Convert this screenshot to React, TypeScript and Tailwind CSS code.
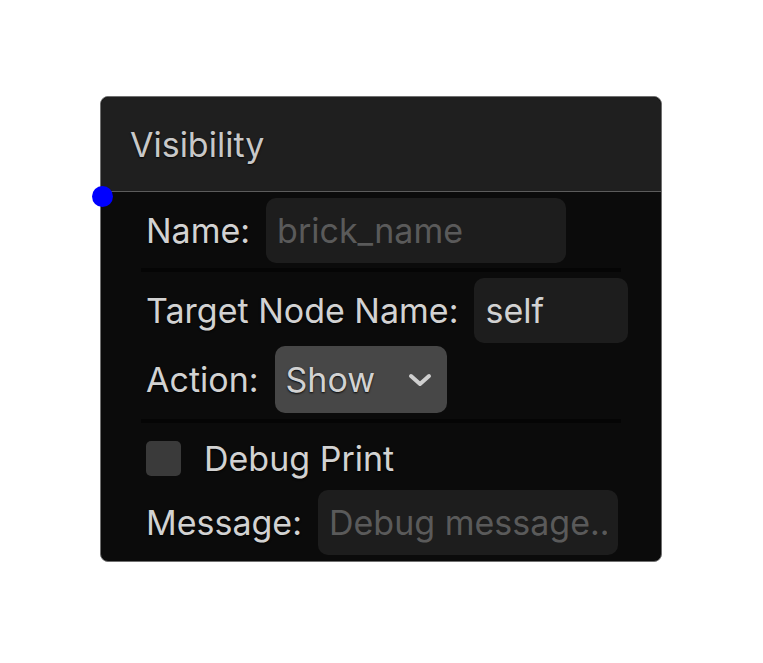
import React from "react";

const font = { fontFamily: "Inter, 'Noto Sans', sans-serif" };

function Divider() {
  return <div className="h-[4px] bg-[#050505]" />;
}

function Field({
  label,
  width,
  placeholder,
  value,
}: {
  label: string;
  width: string;
  placeholder?: string;
  value?: string;
}) {
  return (
    <div className="flex h-[65px] items-center gap-[16px] pl-[5px]">
      <span className="whitespace-nowrap">{label}</span>
      <input
        readOnly
        defaultValue={value}
        placeholder={placeholder}
        className={`${width} h-[65px] rounded-[10px] bg-[#1d1d1d] px-[11px] text-[34px] text-[#d2d2d2] outline-none placeholder:text-[#5a5a5a]`}
        style={font}
      />
    </div>
  );
}

export default function App() {
  return (
    <div
      className="min-h-[663px] w-[763px] bg-white pl-[100px] pt-[96px]"
      style={font}
    >
      <div className="relative w-[562px] rounded-[8px] border border-[#707070] bg-[#0b0b0b] text-[34px] text-[#d2d2d2] [text-shadow:0_1px_2px_rgba(0,0,0,0.9)]">
        {/* node header */}
        <div className="flex h-[95px] items-center rounded-t-[8px] border-b border-[#5c5c5c] bg-[#1f1f1f] pl-[29px] text-[#c8c8c8]">
          Visibility
        </div>

        {/* input port */}
        <div className="absolute left-[-9px] top-[89px] h-[21px] w-[21px] rounded-full bg-[#0000ff]" />

        <div className="px-[40px] pb-[6px] pt-[6px]">
          <Field label="Name:" width="w-[300px]" placeholder="brick_name" />
          <div className="mt-[5px]">
            <Divider />
          </div>
          <div className="mt-[6px]">
            <Field label="Target Node Name:" width="w-[154px]" value="self" />
          </div>
          <div className="mt-[3px] flex h-[67px] items-center gap-[16px] pl-[5px]">
            <span>Action:</span>
            <div className="flex h-[67px] w-[172px] items-center justify-between rounded-[10px] bg-[#474747] pl-[11px] pr-[15px]">
              <span>Show</span>
              <svg width="24" height="14" viewBox="0 0 24 14" fill="none">
                <polyline
                  points="3,3 12,11 21,3"
                  stroke="#cfcfcf"
                  strokeWidth="4"
                  strokeLinecap="round"
                  strokeLinejoin="round"
                />
              </svg>
            </div>
          </div>
          <div className="mt-[6px]">
            <Divider />
          </div>
          <div className="mt-[3px] flex h-[64px] items-center gap-[23px] pl-[5px]">
            <div className="h-[35px] w-[35px] rounded-[5px] bg-[#3a3a3a]" />
            <span>Debug Print</span>
          </div>
          <Field label="Message:" width="w-[300px]" placeholder="Debug message..." />
        </div>
      </div>
    </div>
  );
}
